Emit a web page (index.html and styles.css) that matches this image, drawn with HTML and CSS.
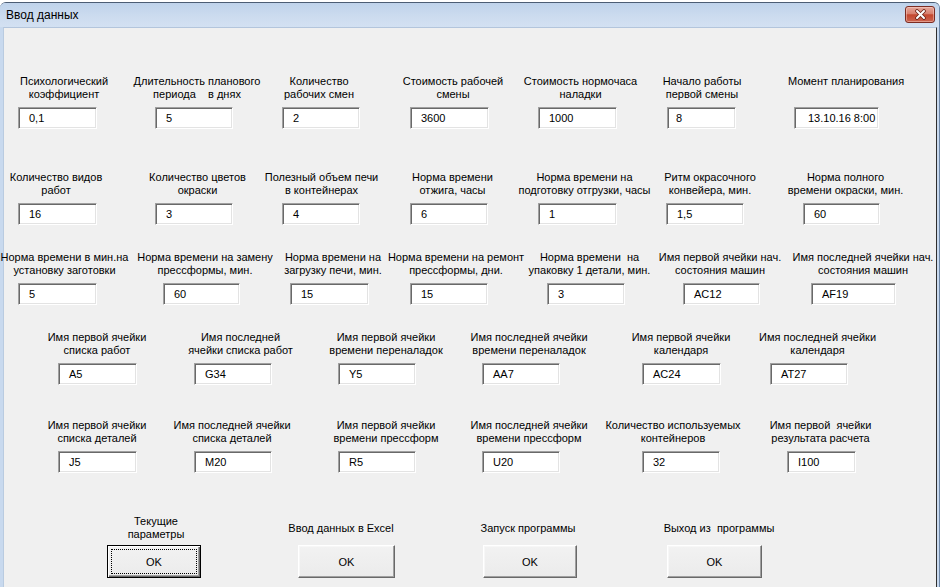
FILE: index.html
```html
<!DOCTYPE html>
<html lang="ru">
<head>
<meta charset="utf-8">
<title>Ввод данных</title>
<link rel="stylesheet" href="styles.css">
</head>
<body>
<div class="window">
  <div class="titlebar">
    <span class="title">Ввод данных</span>
    <button class="close" aria-label="Закрыть">
      <svg width="13" height="11" viewBox="0 0 13 11">
        <path d="M3 2 L10 9 M10 2 L3 9" stroke="#6b2418" stroke-width="3.6" stroke-linecap="round" fill="none"/>
        <path d="M3 2 L10 9 M10 2 L3 9" stroke="#ffffff" stroke-width="2" stroke-linecap="round" fill="none"/>
      </svg>
    </button>
  </div>
  <div class="client">
    <div class="row r1">
      <div class="cell"><div class="lbl"><span>Психологический<br>коэффициент</span></div><div class="field">0,1</div></div>
      <div class="cell"><div class="lbl"><span>Длительность планового<br>периода&nbsp;&nbsp;&nbsp; в днях</span></div><div class="field w78">5</div></div>
      <div class="cell"><div class="lbl"><span>Количество<br>рабочих смен</span></div><div class="field w78">2</div></div>
      <div class="cell"><div class="lbl"><span>Стоимость рабочей<br>смены</span></div><div class="field">3600</div></div>
      <div class="cell"><div class="lbl"><span>Стоимость нормочаса<br>наладки</span></div><div class="field">1000</div></div>
      <div class="cell"><div class="lbl"><span>Начало работы<br>первой смены</span></div><div class="field w69 pl8">8</div></div>
      <div class="cell"><div class="lbl"><span>Момент планирования<br>&nbsp;</span></div><div class="field w85 pl13">13.10.16 8:00</div></div>
    </div>
    <div class="row r2">
      <div class="cell"><div class="lbl"><span>Количество видов<br>работ</span></div><div class="field">16</div></div>
      <div class="cell"><div class="lbl"><span>Количество цветов<br>окраски</span></div><div class="field w78">3</div></div>
      <div class="cell"><div class="lbl"><span>Полезный объем печи<br>в контейнерах</span></div><div class="field w78">4</div></div>
      <div class="cell"><div class="lbl"><span>Норма времени<br>отжига, часы</span></div><div class="field w78">6</div></div>
      <div class="cell"><div class="lbl"><span>Норма времени на<br>подготовку отгрузки, часы</span></div><div class="field">1</div></div>
      <div class="cell"><div class="lbl"><span>Ритм окрасочного<br>конвейера, мин.</span></div><div class="field w78">1,5</div></div>
      <div class="cell"><div class="lbl"><span>Норма полного<br>времени окраски, мин.</span></div><div class="field w77">60</div></div>
    </div>
    <div class="row r3">
      <div class="cell"><div class="lbl"><span>Норма времени в мин.на<br>установку заготовки</span></div><div class="field">5</div></div>
      <div class="cell"><div class="lbl"><span>Норма времени на замену<br>прессформы, мин.</span></div><div class="field w77">60</div></div>
      <div class="cell"><div class="lbl"><span>Норма времени на<br>загрузку печи, мин.</span></div><div class="field">15</div></div>
      <div class="cell"><div class="lbl"><span>Норма времени на ремонт<br>прессформы, дни.</span></div><div class="field w78">15</div></div>
      <div class="cell"><div class="lbl"><span>Норма времени&nbsp; на<br>упаковку 1 детали, мин.</span></div><div class="field w78">3</div></div>
      <div class="cell"><div class="lbl"><span>Имя первой ячейки нач.<br>состояния машин</span></div><div class="field w77">AC12</div></div>
      <div class="cell"><div class="lbl"><span>Имя последней ячейки нач.<br>состояния машин</span></div><div class="field w85">AF19</div></div>
    </div>
    <div class="row r4">
      <div class="cell"><div class="lbl"><span>Имя первой ячейки<br>списка работ</span></div><div class="field">A5</div></div>
      <div class="cell"><div class="lbl"><span>Имя последней<br>ячейки списка работ</span></div><div class="field w78">G34</div></div>
      <div class="cell"><div class="lbl"><span>Имя первой ячейки<br>времени переналадок</span></div><div class="field w78">Y5</div></div>
      <div class="cell"><div class="lbl"><span>Имя последней ячейки<br>времени переналадок</span></div><div class="field w78">AA7</div></div>
      <div class="cell"><div class="lbl"><span>Имя первой ячейки<br>календаря</span></div><div class="field">AC24</div></div>
      <div class="cell"><div class="lbl"><span>Имя последней ячейки<br>календаря</span></div><div class="field w78">AT27</div></div>
    </div>
    <div class="row r5">
      <div class="cell"><div class="lbl"><span>Имя первой ячейки<br>списка деталей</span></div><div class="field">J5</div></div>
      <div class="cell"><div class="lbl"><span>Имя последней ячейки<br>списка деталей</span></div><div class="field w78">M20</div></div>
      <div class="cell"><div class="lbl"><span>Имя первой ячейки<br>времени прессформ</span></div><div class="field w78">R5</div></div>
      <div class="cell"><div class="lbl"><span>Имя последней ячейки<br>времени прессформ</span></div><div class="field w78">U20</div></div>
      <div class="cell"><div class="lbl"><span>Количество используемых<br>контейнеров</span></div><div class="field w78">32</div></div>
      <div class="cell"><div class="lbl"><span>Имя первой&nbsp; ячейки<br>результата расчета</span></div><div class="field w69">I100</div></div>
    </div>
    <div class="row rb">
      <div class="bcell"><div class="lbl"><span>Текущие<br>параметры</span></div><button class="btn focus">OK</button></div>
      <div class="bcell"><div class="lbl"><span>Ввод данных в Excel</span></div><button class="btn">OK</button></div>
      <div class="bcell"><div class="lbl"><span>Запуск программы</span></div><button class="btn">OK</button></div>
      <div class="bcell"><div class="lbl"><span>Выход из&nbsp; программы</span></div><button class="btn">OK</button></div>
    </div>
  </div>
</div>
</body>
</html>
```
FILE: styles.css
```css
html, body {
  margin: 0;
  padding: 0;
  background: #ffffff;
  overflow: hidden;
}

body {
  width: 943px;
  height: 587px;
  font-family: "Liberation Sans", Arial, sans-serif;
  font-size: 11px;
  color: #000;
}

.window {
  margin-top: 2px;
  width: 939px;
  height: 585px;
  background: #c8d9ee;
  border-top: 1px solid #4c5d74;
  border-right: 1px solid #6d87a8;
  border-radius: 6px 6px 0 0;
  display: flex;
  flex-direction: column;
  overflow: hidden;
}

.titlebar {
  height: 24px;
  flex: none;
  display: flex;
  justify-content: space-between;
  align-items: center;
  padding: 0 4px 0 6px;
  background: linear-gradient(#bfd3eb, #cddcef 60%, #d3e1f2);
}

.title {
  font-size: 12px;
  color: #000;
}

.close {
  align-self: flex-start;
  margin-top: 3px;
  width: 30px;
  height: 17px;
  padding: 0;
  border: 1px solid #7c2c22;
  border-radius: 3px;
  background: linear-gradient(#e7a79a 0%, #d8806e 45%, #c4472f 52%, #cc6550 100%);
  box-shadow: inset 0 0 0 1px rgba(255, 220, 210, 0.45);
  display: flex;
  align-items: center;
  justify-content: center;
}

.client {
  flex: 1;
  margin: 0 2px 0 3px;
  background: #f0f0f0;
  border-top: 1px solid #b3c5dc;
  border-left: 1px solid #b9cbe0;
  border-right: 1px solid #2f2f2f;
  padding-top: 47px;
}

.row {
  display: flex;
  align-items: flex-start;
}

.r2 { margin-top: 42px; }
.r3 { margin-top: 26px; }
.r4 { margin-top: 26px; }
.r5 { margin-top: 34px; }
.rb { margin-top: 42px; }

.cell, .bcell {
  flex: none;
  margin-left: var(--m);
  width: var(--w);
}

.lbl {
  height: 26px;
  line-height: 13px;
  display: flex;
  justify-content: center;
  align-items: center;
}

.lbl span {
  white-space: nowrap;
  text-align: center;
  flex: none;
}

.field {
  margin-top: 6px;
  margin-left: var(--f);
  width: 79px;
  height: 22px;
  box-sizing: border-box;
  background: #fff;
  border-top: 1px solid #a0a0a0;
  border-left: 1px solid #a0a0a0;
  border-right: 1px solid #ffffff;
  border-bottom: 1px solid #ffffff;
  box-shadow: inset 1px 1px 0 #696969, inset -1px -1px 0 #e3e3e3;
  padding-left: 10px;
  line-height: 20px;
  white-space: nowrap;
}

.w69 { width: 69px; }
.w77 { width: 77px; }
.w78 { width: 78px; }
.w85 { width: 85px; }
.pl8 { padding-left: 8px; }
.pl13 { padding-left: 13px; }

/* row 1 */
.r1 > :nth-child(1) { --m: 16px; --w: 88px;  --f: -2px; }
.r1 > :nth-child(2) { --m: 25px; --w: 128px; --f: 22px; }
.r1 > :nth-child(3) { --m: 27px; --w: 62px;  --f: -6px; }
.r1 > :nth-child(4) { --m: 54px; --w: 98px;  --f: 6px; }
.r1 > :nth-child(5) { --m: 24px; --w: 109px; --f: 12px; }
.r1 > :nth-child(6) { --m: 28px; --w: 78px;  --f: 4px; }
.r1 > :nth-child(7) { --m: 48px; --w: 114px; --f: 5px; }

/* row 2 */
.r2 > :nth-child(1) { --m: 5px;  --w: 94px;  --f: 9px; }
.r2 > :nth-child(2) { --m: 45px; --w: 99px;  --f: 7px; }
.r2 > :nth-child(3) { --m: 19px; --w: 111px; --f: 16px; }
.r2 > :nth-child(4) { --m: 37px; --w: 77px;  --f: -4px; }
.r2 > :nth-child(5) { --m: 22px; --w: 143px; --f: 25px; }
.r2 > :nth-child(6) { --m: 7px;  --w: 94px;  --f: 3px; }
.r2 > :nth-child(7) { --m: 31px; --w: 115px; --f: 15px; }

/* row 3 */
.r3 > :nth-child(1) { --m: -1px; --w: 123px; --f: 15px; }
.r3 > :nth-child(2) { --m: 15px; --w: 128px; --f: 22px; }
.r3 > :nth-child(3) { --m: 16px; --w: 96px;  --f: 5px; }
.r3 > :nth-child(4) { --m: 10px; --w: 130px; --f: 19px; }
.r3 > :nth-child(5) { --m: 6px;  --w: 125px; --f: 20px; }
.r3 > :nth-child(6) { --m: 7px;  --w: 122px; --f: 24px; }
.r3 > :nth-child(7) { --m: 12px; --w: 140px; --f: 18px; }

/* row 4 */
.r4 > :nth-child(1) { --m: 45px; --w: 96px;  --f: 9px; }
.r4 > :nth-child(2) { --m: 43px; --w: 105px; --f: 6px; }
.r4 > :nth-child(3) { --m: 36px; --w: 114px; --f: 9px; }
.r4 > :nth-child(4) { --m: 28px; --w: 116px; --f: 11px; }
.r4 > :nth-child(5) { --m: 45px; --w: 98px;  --f: 10px; }
.r4 > :nth-child(6) { --m: 30px; --w: 115px; --f: 10px; }

/* row 5 */
.r5 > :nth-child(1) { --m: 45px; --w: 96px;  --f: 9px; }
.r5 > :nth-child(2) { --m: 29px; --w: 116px; --f: 20px; }
.r5 > :nth-child(3) { --m: 47px; --w: 98px;  --f: 1px; }
.r5 > :nth-child(4) { --m: 36px; --w: 116px; --f: 11px; }
.r5 > :nth-child(5) { --m: 18px; --w: 136px; --f: 37px; }
.r5 > :nth-child(6) { --m: 28px; --w: 103px; --f: 18px; }

/* buttons */
.rb > :nth-child(1) { --m: 103px; --w: 94px; --lw: 98px; }
.rb > :nth-child(2) { --m: 97px;  --w: 97px; --lw: 86px; }
.rb > :nth-child(3) { --m: 88px;  --w: 94px; --lw: 90px; }
.rb > :nth-child(4) { --m: 90px;  --w: 95px; --lw: 104px; }

.bcell .lbl {
  width: var(--lw);
}

.btn {
  display: block;
  margin-top: 4px;
  width: var(--w);
  height: 33px;
  box-sizing: border-box;
  padding: 0;
  font-family: "Liberation Sans", Arial, sans-serif;
  font-size: 11px;
  color: #000;
  background: linear-gradient(#f2f2f2, #ebebeb);
  border-top: 1px solid #ffffff;
  border-left: 1px solid #ffffff;
  border-right: 1px solid #696969;
  border-bottom: 1px solid #696969;
  box-shadow: inset -1px -1px 0 #a0a0a0, inset 1px 1px 0 #f7f7f7;
}

.btn.focus {
  border: 1px solid #000;
  box-shadow: inset 1px 1px 0 #ffffff, inset -1px -1px 0 #696969, inset -2px -2px 0 #a0a0a0;
  outline: 1px dotted #000;
  outline-offset: -5px;
}
```
